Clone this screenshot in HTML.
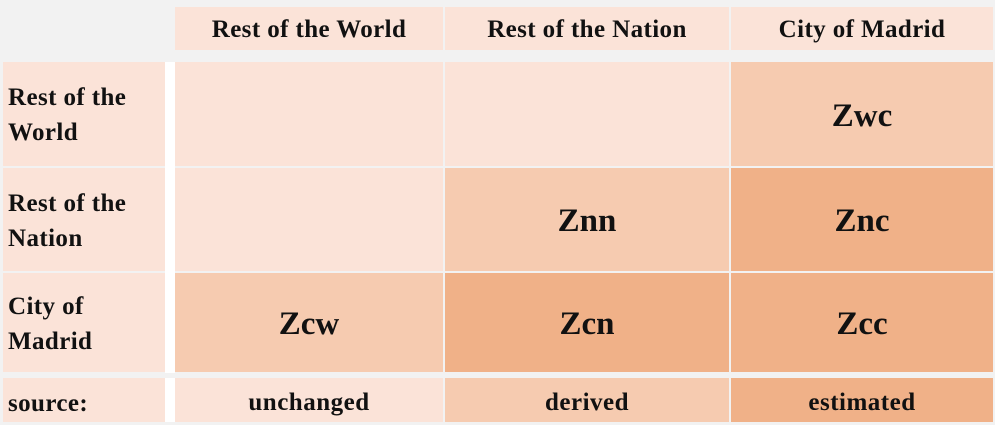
<!DOCTYPE html>
<html><head><style>
body{margin:0;width:995px;height:425px;background:#f2f2f2;position:relative;overflow:hidden;font-family:"Liberation Serif",serif;font-weight:bold;color:#111}
div.c{position:absolute;display:flex;align-items:center;justify-content:center;box-sizing:border-box}
.l{background:#fbe3d8}.m{background:#f6cbb0}.d{background:#f0b188}
.h{font-size:25px;letter-spacing:0.4px;padding-top:2px}.z{font-size:33px;padding-top:4px}.s{font-size:25px;letter-spacing:0.5px;padding-top:6px}
.lab{justify-content:flex-start!important;padding-left:5px;font-size:25px;letter-spacing:0.4px;line-height:35px;padding-top:2px}
</style></head><body>
<div class="c l h" style="left:175px;top:7px;width:268px;height:43px">Rest of the World</div>
<div class="c l h" style="left:445px;top:7px;width:284px;height:43px">Rest of the Nation</div>
<div class="c l h" style="left:731px;top:7px;width:262px;height:43px">City of Madrid</div>

<div class="c" style="left:165px;top:62px;width:10px;height:311px;background:#fff"></div>
<div class="c" style="left:165px;top:378px;width:10px;height:44px;background:#fff"></div>

<div class="c l lab" style="left:3px;top:62px;width:162px;height:104px">Rest of the<br>World</div>
<div class="c l lab" style="left:3px;top:168px;width:162px;height:103px">Rest of the<br>Nation</div>
<div class="c l lab" style="left:3px;top:273px;width:162px;height:99px">City of<br>Madrid</div>
<div class="c l lab" style="left:3px;top:378px;width:162px;height:44px;padding-top:6px">source:</div>

<div class="c l" style="left:175px;top:62px;width:268px;height:104px"></div>
<div class="c l" style="left:445px;top:62px;width:284px;height:104px"></div>
<div class="c m z" style="left:731px;top:62px;width:262px;height:104px">Zwc</div>

<div class="c l" style="left:175px;top:168px;width:268px;height:103px"></div>
<div class="c m z" style="left:445px;top:168px;width:284px;height:103px">Znn</div>
<div class="c d z" style="left:731px;top:168px;width:262px;height:103px">Znc</div>

<div class="c m z" style="left:175px;top:273px;width:268px;height:99px">Zcw</div>
<div class="c d z" style="left:445px;top:273px;width:284px;height:99px">Zcn</div>
<div class="c d z" style="left:731px;top:273px;width:262px;height:99px">Zcc</div>

<div class="c l s" style="left:175px;top:378px;width:268px;height:44px">unchanged</div>
<div class="c m s" style="left:445px;top:378px;width:284px;height:44px">derived</div>
<div class="c d s" style="left:731px;top:378px;width:262px;height:44px">estimated</div>
</body></html>
